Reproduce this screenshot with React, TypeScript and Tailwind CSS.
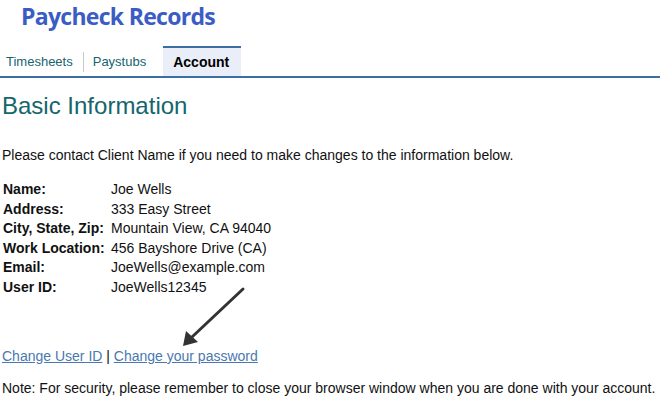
export default function App() {
  const rows: [string, string][] = [
    ['Name:', 'Joe Wells'],
    ['Address:', '333 Easy Street'],
    ['City, State, Zip:', 'Mountain View, CA 94040'],
    ['Work Location:', '456 Bayshore Drive (CA)'],
    ['Email:', 'JoeWells@example.com'],
    ['User ID:', 'JoeWells12345'],
  ]

  return (
    <div className="relative w-[662px] h-[401px] bg-white overflow-hidden font-['Liberation_Sans',Arial,sans-serif] text-[14px] text-[#111]">
      <h1 className="pl-[21px] h-[46px] font-['Open_Sans',sans-serif] font-bold text-[23px] leading-[32px] text-[#3a5cc4] tracking-[-0.7px]">
        Paycheck Records
      </h1>

      {/* tabs */}
      <div className="flex items-stretch h-[32px] w-[660px] border-b-2 border-[#3b6ea3]">
        <div className="flex items-center border-t-2 border-transparent">
          <span className="pl-[6px] pr-[10px] border-r border-[#c8c8c8] text-[13px] leading-[20px] text-[#16646e]">Timesheets</span>
        </div>
        <div className="flex items-center pl-[9px] pr-[17px] border-t-2 border-transparent text-[13px] text-[#16646e]">Paystubs</div>
        <div className="flex items-center pl-[10px] pr-[12px] bg-[#eaeef8] border-t-2 border-[#3b6ea3] font-bold text-black">Account</div>
      </div>

      <h2 className="mt-[14px] pl-[2px] text-[24px] leading-[28px] text-[#14666c]">Basic Information</h2>

      <p className="mt-[27px] pl-[2px] leading-[16px]">
        Please contact Client Name if you need to make changes to the information below.
      </p>

      <table className="mt-[17px] ml-[3px] border-collapse">
        <tbody>
          {rows.map(([label, value]) => (
            <tr key={label} className="leading-[19.6px]">
              <td className="p-0 w-[108px] font-bold whitespace-nowrap">{label}</td>
              <td className="p-0">{value}</td>
            </tr>
          ))}
        </tbody>
      </table>

      <div className="mt-[50px] pl-[2px] leading-[16px]">
        <a href="#" className="text-[#4a78b0] underline">Change User ID</a>
        <span> | </span>
        <a href="#" className="text-[#4a78b0] underline">Change your password</a>
      </div>

      <p className="mt-[16px] pl-[2px] leading-[16px] whitespace-nowrap">
        Note: For security, please remember to close your browser window when you are done with your account.
      </p>

      {/* arrow annotation */}
      <svg className="absolute left-0 top-0" width="662" height="401" viewBox="0 0 662 401">
        <line x1="243" y1="289" x2="192" y2="337" stroke="#333" strokeWidth="3" strokeLinecap="round" />
        <polygon points="183,346 186,331 198,342" fill="#333" />
      </svg>
    </div>
  )
}
